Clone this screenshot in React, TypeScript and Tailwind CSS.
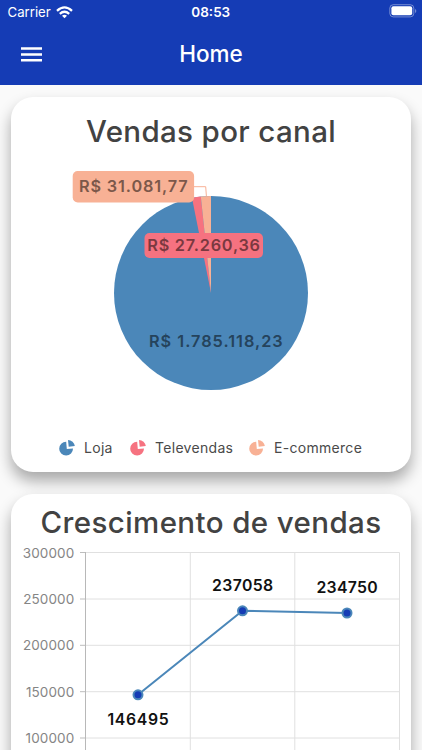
import type { ReactNode } from 'react';

function Card({ title, className, children }: { title: string; className: string; children: ReactNode }) {
  return (
    <section className={`mx-[11px] shrink-0 rounded-[22px] bg-white shadow-[0_9px_15px_0_rgba(0,0,0,0.33)] ${className}`}>
      <h2 className="whitespace-nowrap text-center text-[29.5px] font-medium leading-[35px] text-[#424242]">{title}</h2>
      {children}
    </section>
  );
}

function WifiIcon() {
  return (
    <svg width="17" height="13" viewBox="0 0 17 13" fill="none" stroke="white" strokeWidth="2.3">
      <path d="M1 4.8Q8.5 -2 16 4.8" />
      <path d="M3.8 7.8Q8.5 3.6 13.2 7.8" />
      <path d="M6 9.8Q8.5 7.6 11 9.8L8.5 12.3Z" fill="white" stroke="none" />
    </svg>
  );
}

function BatteryIcon() {
  return (
    <svg width="28" height="14" viewBox="0 0 28 14">
      <rect x="0.8" y="0.7" width="24" height="12.2" rx="3.5" fill="none" stroke="white" strokeOpacity="0.4" />
      <rect x="2.4" y="2.3" width="20.8" height="9" rx="2" fill="white" />
      <path d="M26 5v4q1.3-.5 1.3-2T26 5Z" fill="white" fillOpacity="0.4" />
    </svg>
  );
}

function LegendItem({ label, color, className }: { label: string; color: string; className: string }) {
  return (
    <div className={`flex items-center gap-[9px] ${className}`}>
      <svg width="16" height="16" viewBox="0 0 16 16" fill={color}>
        <path d="M7.2 1.8L7.8 8.9L14 8.6A6.9 6.9 0 1 1 7.2 1.8Z" />
        <path d="M9 0A6.9 6.9 0 0 1 15.8 6.1L9.7 6.8Z" />
      </svg>
      <span>{label}</span>
    </div>
  );
}

function PieChart() {
  return (
    <svg className="block w-full" height="240" viewBox="11 160 400 240" fontSize="16.3" fontWeight="600">
      <circle cx="211" cy="293" r="97" fill="#4b87b9" />
      <path d="M211 293L192 197.9A97 97 0 0 1 200.8 196.5Z" fill="#f67280" />
      <path d="M211 293L200.8 196.5A97 97 0 0 1 211 196Z" fill="#f8b195" />
      <path d="M194 186.7H205.7L206.4 196" fill="none" stroke="#f8b195" />
      <rect x="72.7" y="171" width="121.4" height="31.4" rx="5" fill="#f8b195" />
      <rect x="144.5" y="233" width="118.5" height="25" rx="5" fill="#f67280" />
      <text x="79" y="192.4" textLength="109" fill="#7c584a">R$ 31.081,77</text>
      <text x="147.3" y="251" textLength="113" fill="#7b3940">R$ 27.260,36</text>
      <text x="149" y="346.8" textLength="134" fill="#25435c">R$ 1.785.118,23</text>
    </svg>
  );
}

const ticks = [
  { y: 552.5, label: '300000' },
  { y: 599, label: '250000' },
  { y: 645.3, label: '200000' },
  { y: 691.7, label: '150000' },
  { y: 738, label: '100000' },
];

const points = [
  { x: 138, y: 694.8, labelY: 725, value: '146495' },
  { x: 242.5, y: 610.8, labelY: 591, value: '237058' },
  { x: 347, y: 613, labelY: 593.2, value: '234750' },
];

function LineChart() {
  return (
    <svg className="block w-full" height="210" viewBox="11 540 400 210">
      {ticks.map((t) => (
        <g key={t.label}>
          <path d={`M86 ${t.y}H399.5`} stroke="#e0e0e0" />
          <path d={`M80 ${t.y}H86`} stroke="#bdbdbd" />
          <text x="74.3" y={t.y + 5} textAnchor="end" fontSize="13.5" letterSpacing="0.1" fill="#858585">{t.label}</text>
        </g>
      ))}
      <path d="M190.3 552.5V750M294.8 552.5V750M399.5 552.5V750" stroke="#e0e0e0" />
      <path d="M85.5 552V750" stroke="#b8b8b8" />
      <polyline points={points.map((p) => `${p.x},${p.y}`).join(' ')} fill="none" stroke="#4b87b9" strokeWidth="2" />
      {points.map((p) => (
        <g key={p.value}>
          <circle cx={p.x} cy={p.y} r="4.5" fill="#153cb5" stroke="#4b87b9" strokeWidth="2" />
          <text x={p.x - 30.5} y={p.labelY} textLength="61.5" fontSize="15.8" fontWeight="600" fill="#111">{p.value}</text>
        </g>
      ))}
    </svg>
  );
}

export default function App() {
  return (
    <div className="flex h-[750px] w-[422px] flex-col overflow-hidden bg-[#fafafa] font-[Inter,sans-serif]">
      <header className="h-[85px] shrink-0 bg-[#153cb5] text-white">
        <div className="grid h-6 grid-cols-3 items-center pl-[7.5px] pr-[5px]">
          <div className="flex items-center gap-[5px] text-[13.2px] leading-4"><span>Carrier</span><WifiIcon /></div>
          <time className="pr-[3px] text-center text-[13.5px] font-semibold leading-4">08:53</time>
          <div className="flex justify-end pb-0.5"><BatteryIcon /></div>
        </div>
        <div className="grid h-[60px] grid-cols-3 items-center px-[21px]">
          <svg width="21" height="15" viewBox="0 0 21 15" fill="white"><path d="M0 .3h21v2.5H0zM0 6.2h21v2.5H0zM0 12h21v2.5H0z" /></svg>
          <h1 className="text-center text-[22.5px] font-medium leading-7">Home</h1>
        </div>
      </header>
      <main className="flex min-h-0 flex-1 flex-col gap-[22.5px] overflow-hidden pt-3">
        <Card title="Vendas por canal" className="h-[374.5px] pt-[17px] tracking-[0.35px]">
          <div className="pt-[11px]"><PieChart /></div>
          <div className="flex pl-12 pt-[40px] text-[14px] leading-4 tracking-[0.3px] text-[#4a4a4a]">
            <LegendItem label="Loja" color="#4b87b9" className="w-[71px]" />
            <LegendItem label="Televendas" color="#f67280" className="w-[119px]" />
            <LegendItem label="E-commerce" color="#f8b195" className="" />
          </div>
        </Card>
        <Card title="Crescimento de vendas" className="h-[400px] pt-[11px] tracking-[0.4px]">
          <LineChart />
        </Card>
      </main>
    </div>
  );
}
